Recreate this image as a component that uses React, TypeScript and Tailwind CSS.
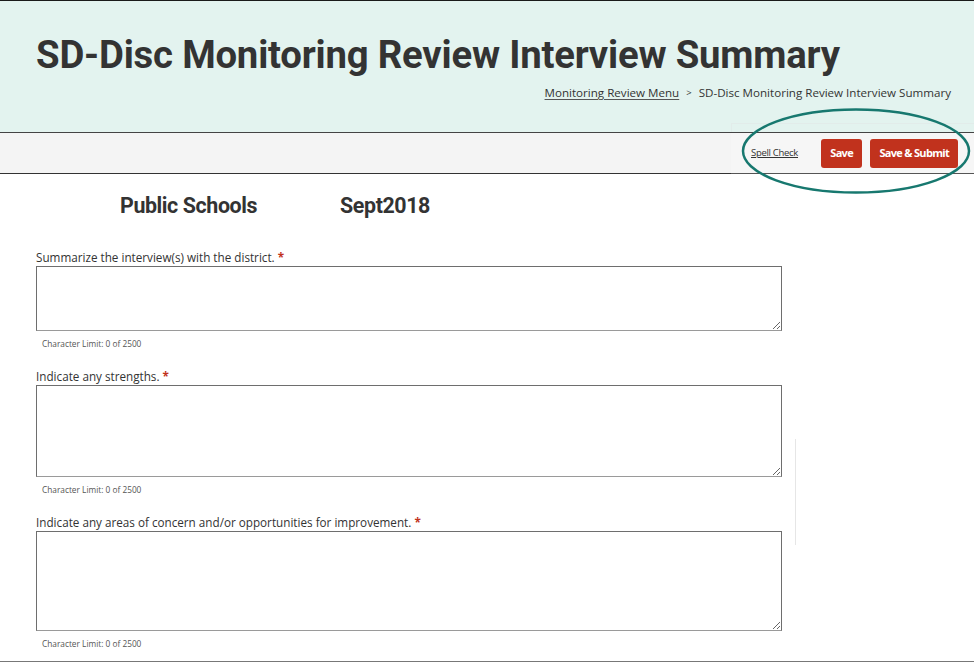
import React from "react";

const fields = [
  { label: "Summarize the interview(s) with the district.", h: "h-[65px]" },
  { label: "Indicate any strengths.", h: "h-[92px]" },
  { label: "Indicate any areas of concern and/or opportunities for improvement.", h: "h-[100px]" },
];

export default function App() {
  return (
    <div className="relative w-[974px] h-[662px] overflow-hidden bg-white font-['Open_Sans',sans-serif] text-[#333]">
      {/* header */}
      <div className="h-[132px] border-t border-[#1a1a1a] bg-[#e3f3ef] pl-[36px] pr-[23px] pt-[31px]">
        <h1 className="font-['Roboto',sans-serif] font-bold text-[38.3px] leading-[46px] text-[#333] tracking-[-0.2px]">
          SD-Disc Monitoring Review Interview Summary
        </h1>
        <div className="mt-[6px] flex justify-end items-center gap-[7px] text-[11.6px] text-[#333]">
          <a className="underline underline-offset-2 decoration-[#555]">Monitoring Review Menu</a>
          <span className="text-[9.5px]">&gt;</span>
          <span>SD-Disc Monitoring Review Interview Summary</span>
        </div>
      </div>

      {/* toolbar */}
      <div className="relative flex h-[42px] border-t border-[#444] bg-[#f4f4f4]">
        <div className="flex-1 border-b border-[#333]" />
        <div className="relative flex w-[243px] items-center border-b border-[#555] bg-[#f6f6f6] pl-[20px] pr-[16px]">
          <div className="absolute left-0 right-0 -top-[10px] h-[9px] border-l border-t border-[#e2ecea]" />
          <a className="text-[9.5px] underline text-[#333] tracking-[-0.3px]">Spell Check</a>
          <button className="ml-auto h-[29px] rounded-[3px] bg-[#c1321d] px-[9.5px] text-[11px] font-bold text-white tracking-[-0.7px]">
            Save
          </button>
          <button className="ml-[8px] h-[29px] rounded-[3px] bg-[#c1321d] px-[9px] text-[11px] font-bold text-white tracking-[-0.7px]">
            Save &amp; Submit
          </button>
        </div>
      </div>

      {/* content */}
      <div className="pl-[36px]">
        <div className="mt-[17px] flex font-['Roboto',sans-serif] font-bold text-[21.4px] leading-[30px] text-[#333] tracking-[-0.4px]">
          <span className="ml-[84px]">Public Schools</span>
          <span className="ml-[83px]">Sept2018</span>
        </div>
        <div className="mt-[28px] flex flex-col">
          {fields.map((f, i) => (
            <div key={i} className="flex flex-col">
              <label className="text-[11.7px] leading-[16px] text-[#333]">
                {f.label} <span className="text-[#c1321d] font-bold">*</span>
              </label>
              <textarea
                className={`mt-[1px] w-[746px] ${f.h} border border-[#6e6e6e] border-b-[#9a9a9a] bg-white`}
              />
              <div className="mt-[8px] pl-[6px] text-[8.3px] leading-[10px] text-[#555]">Character Limit: 0 of 2500</div>
              {i < 2 && <div className="h-[19px]" />}
            </div>
          ))}
        </div>
      </div>

      {/* faint divider at right of form */}
      <div className="absolute left-[795px] top-[439px] h-[106px] w-px bg-[#e6e6e6]" />

      {/* bottom rule */}
      <div className="absolute left-0 right-0 bottom-0 h-px bg-[#777]" />

      {/* annotation ellipse */}
      <svg className="absolute left-[738px] top-[106px]" width="236" height="90" viewBox="0 0 236 90">
        <ellipse cx="118" cy="45" rx="113" ry="41.5" fill="none" stroke="#17786f" strokeWidth="2.5" />
      </svg>
    </div>
  );
}
